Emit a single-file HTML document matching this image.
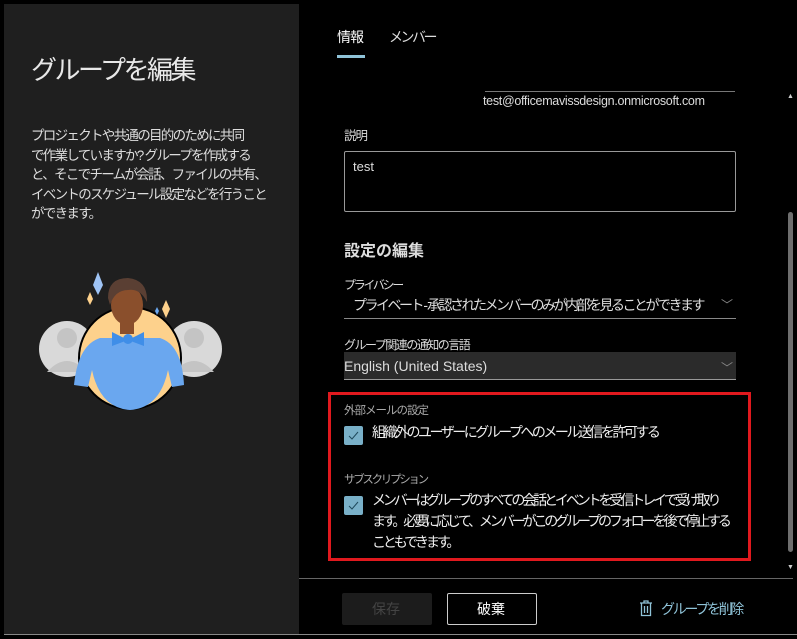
<!DOCTYPE html>
<html><head><meta charset="utf-8"><style>
*{margin:0;padding:0;box-sizing:border-box}
body{width:797px;height:639px;background:#000;position:relative;overflow:hidden;font-family:"Liberation Sans","Noto Sans CJK JP",sans-serif;color:#fff}
.a{position:absolute;white-space:nowrap}
.left{position:absolute;left:4px;top:4px;width:295px;height:630px;background:#1f1f1f}
.cb{position:absolute;width:19px;height:19px;background:#79b0c8;border-radius:2px}
.cb svg{position:absolute;left:4px;top:5px}
</style></head><body>
<div class="left"></div>
<div class="a" style="left:31px;top:50px;font-size:26px;letter-spacing:-2.5px;color:#e8e8e8">グループを編集</div>
<div class="a" style="left:31px;top:126px;font-size:13.5px;line-height:19.5px;letter-spacing:-1.7px;color:#ddd">プロジェクトや共通の目的のために共同<br>で作業していますか? グループを作成する<br>と、そこでチームが会話、ファイルの共有、<br>イベントのスケジュール設定などを行うこと<br>ができます。</div>
<svg class="a" style="left:0;top:250px" width="300" height="180">
<circle cx="67" cy="99" r="28" fill="#d9d9d9"/><circle cx="67" cy="88" r="10" fill="#c4c4c4"/><path d="M47 122 Q67 100 87 122Z" fill="#c4c4c4"/>
<circle cx="194" cy="99" r="28" fill="#d9d9d9"/><circle cx="194" cy="88" r="10" fill="#c4c4c4"/><path d="M174 122 Q194 100 214 122Z" fill="#c4c4c4"/>
<circle cx="130" cy="108" r="52" fill="#000"/><circle cx="130" cy="108" r="50" fill="#fdd18c"/>
<path d="M74 135 Q78 95 100 88 L160 88 Q182 95 184 135 L172 137 L168 120 Q160 158 130 160 Q100 158 92 120 L88 137Z" fill="#6aa7ef"/>
<ellipse cx="127" cy="55" rx="16" ry="20" fill="#8a4f2c"/>
<path d="M108 48 Q108 28 128 28 Q148 30 147 52 Q140 38 128 40 Q115 40 110 55Z" fill="#5a3f33"/>
<rect x="120" y="70" width="14" height="14" fill="#8a4f2c"/>
<path d="M112 82 L128 90 L144 82 L144 96 L128 90 L112 96Z" fill="#3f8ee8"/><circle cx="128" cy="89" r="5" fill="#3f8ee8"/>
<path d="M98 22 L103 35 L98 45 L93 35Z" fill="#9fc4f5"/><path d="M90 42 L93 49 L90 55 L87 49Z" fill="#fdd18c"/>
<path d="M166 50 L170 59 L166 68 L162 59Z" fill="#fdd18c"/><path d="M157 57 L159 61 L157 65 L155 61Z" fill="#6aa7ef"/>
</svg>
<div class="a" style="left:337px;top:27px;font-size:14px;letter-spacing:-1px;color:#fff">情報</div>
<div class="a" style="left:389px;top:27px;font-size:14px;letter-spacing:-2.5px;color:#ddd">メンバー</div>
<div class="a" style="left:337px;top:55px;width:28px;height:3px;background:#8fc3d8"></div>
<div class="a" style="left:485px;top:91px;width:250px;height:1px;background:#777"></div>
<div class="a" style="left:483px;top:94px;font-size:12.5px;letter-spacing:-0.3px;color:#ddd">test@officemavissdesign.onmicrosoft.com</div>
<div class="a" style="left:344px;top:125px;font-size:12.5px;letter-spacing:-1px;color:#ddd">説明</div>
<div class="a" style="left:344px;top:151px;width:392px;height:61px;border:1px solid #999;border-radius:2px"></div>
<div class="a" style="left:353px;top:159px;font-size:13px;color:#ddd">test</div>
<div class="a" style="left:344px;top:237px;font-size:16px;font-weight:bold;color:#ddd">設定の編集</div>
<div class="a" style="left:344px;top:276px;font-size:12px;letter-spacing:-2.3px;color:#ddd">プライバシー</div>
<div class="a" style="left:353px;top:295px;font-size:14px;letter-spacing:-2.5px;color:#ddd">プライベート - 承認されたメンバーのみが内部を見ることができます</div>
<div class="a" style="left:721px;top:296px;font-size:12px;color:#888">﹀</div>
<div class="a" style="left:344px;top:318px;width:392px;height:1px;background:#888"></div>
<div class="a" style="left:344px;top:336px;font-size:12px;letter-spacing:-1.5px;color:#ddd">グループ関連の通知の言語</div>
<div class="a" style="left:344px;top:352px;width:392px;height:28px;background:#2b2b2b;border-bottom:1px solid #999"></div>
<div class="a" style="left:344px;top:358px;font-size:14px;color:#ddd">English (United States)</div>
<div class="a" style="left:721px;top:359px;font-size:12px;color:#888">﹀</div>
<div class="a" style="left:328px;top:392px;width:423px;height:169px;border:3px solid #e0191e"></div>
<div class="a" style="left:344px;top:402px;font-size:11.5px;letter-spacing:-1px;color:#aaa">外部メールの設定</div>
<div class="cb" style="left:344px;top:426px"><svg width="11" height="9"><path d="M1 5 L4 8 L10 1" stroke="#1f4a5c" stroke-width="1" fill="none"/></svg></div>
<div class="a" style="left:372px;top:422px;font-size:14px;letter-spacing:-2.5px;color:#eee">組織外のユーザーにグループへのメール送信を許可する</div>
<div class="a" style="left:344px;top:471px;font-size:11.5px;letter-spacing:-2.3px;color:#aaa">サブスクリプション</div>
<div class="cb" style="left:344px;top:496px"><svg width="11" height="9"><path d="M1 5 L4 8 L10 1" stroke="#1f4a5c" stroke-width="1" fill="none"/></svg></div>
<div class="a" style="left:372px;top:490px;font-size:14px;line-height:21px;letter-spacing:-3.1px;color:#eee">メンバーはグループのすべての会話とイベントを受信トレイで受け取り<br>ます。必要に応じて、メンバーがこのグループのフォローを後で停止する<br>こともできます。</div>
<div class="a" style="left:787px;top:93px;font-size:7px;color:#ccc">▲</div>
<div class="a" style="left:788px;top:212px;width:5px;height:340px;background:#6e6e6e;border-radius:3px"></div>
<div class="a" style="left:787px;top:564px;font-size:7px;color:#ccc">▼</div>
<div class="a" style="left:299px;top:578px;width:494px;height:1px;background:#666"></div>
<div class="a" style="left:342px;top:593px;width:90px;height:32px;background:#1c1c1c;border-radius:2px"></div>
<div class="a" style="left:372px;top:599px;font-size:14px;color:#444">保存</div>
<div class="a" style="left:447px;top:593px;width:90px;height:32px;border:1px solid #ccc;border-radius:2px"></div>
<div class="a" style="left:477px;top:599px;font-size:14px;color:#fff">破棄</div>
<svg class="a" style="left:639px;top:600px" width="14" height="17"><path d="M1 3 H13 M5 3 V1 H9 V3 M2.5 3 V15.5 H11.5 V3 M5.5 6 V13 M8.5 6 V13" stroke="#8fc3d8" stroke-width="1.3" fill="none"/></svg>
<div class="a" style="left:661px;top:599px;font-size:14px;letter-spacing:-2.3px;color:#8fc3d8">グループを削除</div>
<div class="a" style="left:4px;top:634px;width:793px;height:1px;background:#888"></div>
</body></html>
